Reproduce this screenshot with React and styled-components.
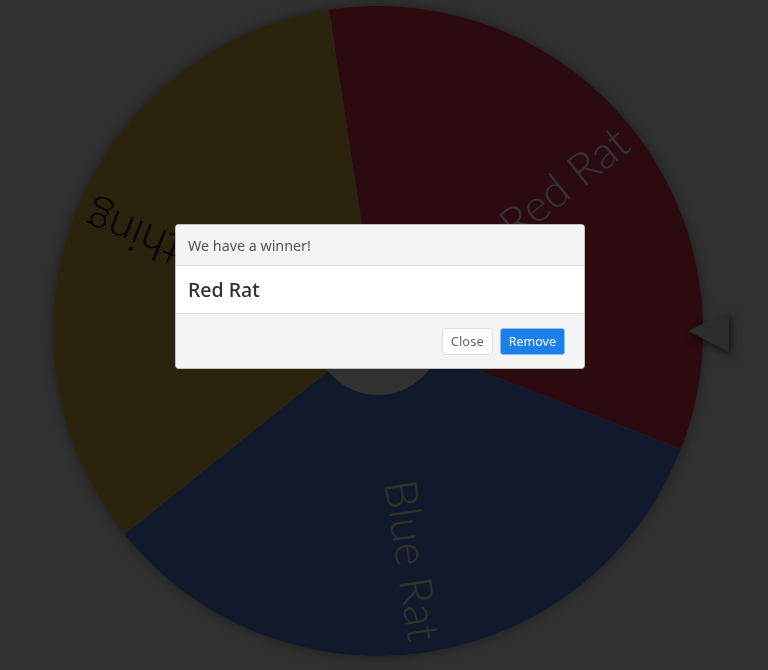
import React from 'react';
import styled, { createGlobalStyle } from 'styled-components';

const GlobalStyle = createGlobalStyle`
  html, body {
    margin: 0;
    padding: 0;
    background: #f2f2f2;
  }
  body {
    font-family: "Noto Sans", "Liberation Sans", sans-serif;
    overflow: hidden;
  }
`;

const Stage = styled.div`
  box-sizing: border-box;
  height: 670px;
  padding: 6px 0 0 53px;
`;

const WheelWrap = styled.div`
  position: relative;
  width: 650px;
  height: 650px;
  border-radius: 50%;
  box-shadow: 0 0 12px rgba(0, 0, 0, 0.45);
`;

const Pointer = styled.svg`
  position: absolute;
  left: 634px;
  top: 300px;
  filter: drop-shadow(3px 4px 4px rgba(0, 0, 0, 0.6));
`;

const Overlay = styled.div`
  position: fixed;
  inset: 0;
  background: rgba(0, 0, 0, 0.8);
  display: flex;
  justify-content: center;
  align-items: flex-start;
  padding: 224px 8px 0 0;
`;

const Dialog = styled.div`
  width: 410px;
  box-sizing: border-box;
  border: 1px solid rgba(0, 0, 0, 0.25);
  border-radius: 4px;
  overflow: hidden;
  background: #fff;
`;

const Header = styled.div`
  height: 40px;
  display: flex;
  align-items: center;
  padding: 0 12px;
  background: #f4f4f4;
  border-bottom: 1px solid #dcdcdc;
  font-size: 14.3px;
  color: #555;
`;

const Body = styled.div`
  height: 47px;
  display: flex;
  align-items: center;
  padding: 0 12px;
  border-bottom: 1px solid #dcdcdc;
  font-size: 19.5px;
  font-weight: 500;
  color: #2e2e2e;
`;

const Footer = styled.div`
  height: 54px;
  display: flex;
  align-items: center;
  justify-content: flex-end;
  gap: 7px;
  padding: 0 19px 0 12px;
  background: #f4f4f4;
`;

const Button = styled.button`
  height: 27px;
  padding: 0 8px;
  border-radius: 3px;
  font-family: inherit;
  font-size: ${(p) => (p.primary ? '12.5px' : '13px')};
  cursor: pointer;
  border: 1px solid ${(p) => (p.primary ? '#8dbdf2' : '#dedede')};
  background: ${(p) => (p.primary ? '#1a7fea' : '#fff')};
  color: ${(p) => (p.primary ? '#fff' : '#666')};
`;

const R = 325;
const segments = [
  { label: 'Red Rat', fill: '#d6374f', text: '#ffffff' },
  { label: 'Blue Rat', fill: '#5683dc', text: '#fff4c4' },
  { label: 'Something', fill: '#d8b043', text: '#000000' },
];
const START = -8.7;

const pt = (deg, r) => {
  const a = (deg * Math.PI) / 180;
  return [R + r * Math.sin(a), R - r * Math.cos(a)];
};

const Wheel = () => (
  <svg width={650} height={650} viewBox="0 0 650 650">
    {segments.map((s, i) => {
      const a1 = START + i * 120;
      const a2 = a1 + 120;
      const [x1, y1] = pt(a1, R);
      const [x2, y2] = pt(a2, R);
      return (
        <path
          key={s.label}
          d={`M${R} ${R} L${x1} ${y1} A${R} ${R} 0 0 1 ${x2} ${y2} Z`}
          fill={s.fill}
        />
      );
    })}
    {segments.map((s, i) => {
      const mid = START + i * 120 + 60;
      return (
        <text
          key={s.label}
          x={R + 313}
          y={R}
          textAnchor="end"
          dominantBaseline="central"
          fontFamily="Lato, 'Open Sans', sans-serif"
          fontWeight="300"
          fontSize="45"
          fill={s.text}
          transform={`rotate(${mid - 90} ${R} ${R})`}
        >
          {s.label}
        </text>
      );
    })}
    <circle cx={R} cy={R} r={64} fill="#f2f2f2" />
  </svg>
);

export default function App() {
  return (
    <>
      <GlobalStyle />
      <Stage>
        <WheelWrap>
          <Wheel />
          <Pointer width={44} height={50} viewBox="0 0 44 50">
            <polygon points="1,25 42,5 42,46" fill="#dcdcdc" />
          </Pointer>
        </WheelWrap>
      </Stage>
      <Overlay>
        <Dialog>
          <Header>We have a winner!</Header>
          <Body>Red Rat</Body>
          <Footer>
            <Button>Close</Button>
            <Button primary>Remove</Button>
          </Footer>
        </Dialog>
      </Overlay>
    </>
  );
}
